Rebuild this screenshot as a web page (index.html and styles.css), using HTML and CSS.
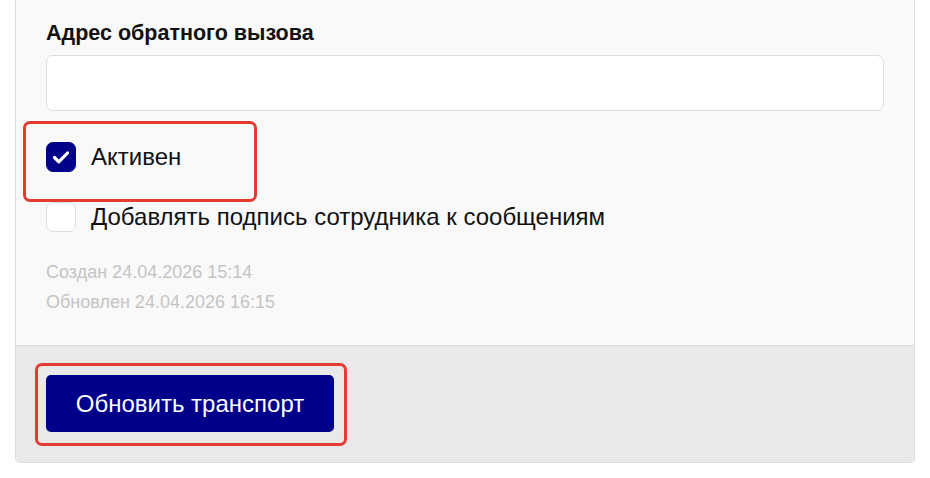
FILE: index.html
```html
<!DOCTYPE html>
<html lang="ru">
<head>
<meta charset="utf-8">
<link rel="stylesheet" href="styles.css">
</head>
<body>
<div class="card">
  <div class="card-body">
    <label class="field-label" for="cb">Адрес обратного вызова</label>
    <input class="text-input" id="cb" type="text">
    <div class="checks">
      <label class="check-row highlight-active">
        <span class="box checked">
          <svg viewBox="0 0 30 30" width="30" height="30"><path d="M8.5 15.5 L12.8 19.8 L21.5 11" fill="none" stroke="#fff" stroke-width="3.2" stroke-linecap="round" stroke-linejoin="round"/></svg>
        </span>
        <span class="check-text">Активен</span>
      </label>
      <label class="check-row">
        <span class="box"></span>
        <span class="check-text">Добавлять подпись сотрудника к сообщениям</span>
      </label>
    </div>
    <div class="meta">
      <div>Создан 24.04.2026 15:14</div>
      <div>Обновлен 24.04.2026 16:15</div>
    </div>
  </div>
  <div class="card-footer">
    <button class="btn-primary" type="button">Обновить транспорт</button>
  </div>
</div>
</body>
</html>
```

FILE: styles.css
```css
* { box-sizing: border-box; }
html, body { margin: 0; padding: 0; background: #ffffff; }
body {
  font-family: "Liberation Sans", Arial, sans-serif;
  color: #111111;
  padding: 0 15px;
}
.card {
  width: 900px;
  background: #f9f9f9;
  border: 1px solid #dcdcdc;
  border-top: 0;
  border-radius: 0 0 5px 5px;
}
.card-body {
  padding: 21px 30px 28px 30px;
  display: flex;
  flex-direction: column;
}
.field-label {
  font-size: 21.5px;
  line-height: 24px;
  font-weight: bold;
  color: #111;
}
.text-input {
  margin-top: 10px;
  height: 56px;
  width: 100%;
  background: #ffffff;
  border: 1px solid #dddddd;
  border-radius: 7px;
  font: inherit;
  padding: 0 14px;
  outline: none;
}
.checks {
  margin-top: 31px;
  display: flex;
  flex-direction: column;
  gap: 30px;
}
.check-row {
  display: flex;
  align-items: center;
  gap: 15px;
  height: 30px;
  position: relative;
  align-self: flex-start;
}
.highlight-active::after {
  content: "";
  position: absolute;
  left: -23px;
  top: -21px;
  width: 228px;
  height: 75px;
  border: 3px solid #e53b30;
  border-radius: 7px;
  pointer-events: none;
}
.box {
  width: 30px;
  height: 30px;
  border-radius: 7px;
  background: #ffffff;
  border: 1px solid #dddddd;
  flex: none;
  display: block;
}
.box.checked {
  background: #000088;
  border-color: #000088;
}
.box svg { display: block; margin: -1px; }
.check-text {
  font-size: 24px;
  line-height: 30px;
  color: #111;
}
.meta {
  margin-top: 25px;
  font-size: 18px;
  line-height: 30px;
  color: #c4c4c4;
}
.card-footer {
  background: #e9e9e9;
  border-top: 1px solid #d9d9d9;
  padding: 29px 30px 30px 30px;
  border-radius: 0 0 5px 5px;
}
.btn-primary {
  position: relative;
  display: block;
  height: 57px;
  width: 288px;
  background: #00008b;
  color: #ffffff;
  border: 0;
  border-radius: 5px;
  font-family: "Liberation Sans", Arial, sans-serif;
  font-size: 24px;
  cursor: pointer;
}
.btn-primary::after {
  content: "";
  position: absolute;
  left: -11px;
  top: -12px;
  right: -13px;
  bottom: -14px;
  border: 3px solid #e53b30;
  border-radius: 7px;
  pointer-events: none;
}
```
